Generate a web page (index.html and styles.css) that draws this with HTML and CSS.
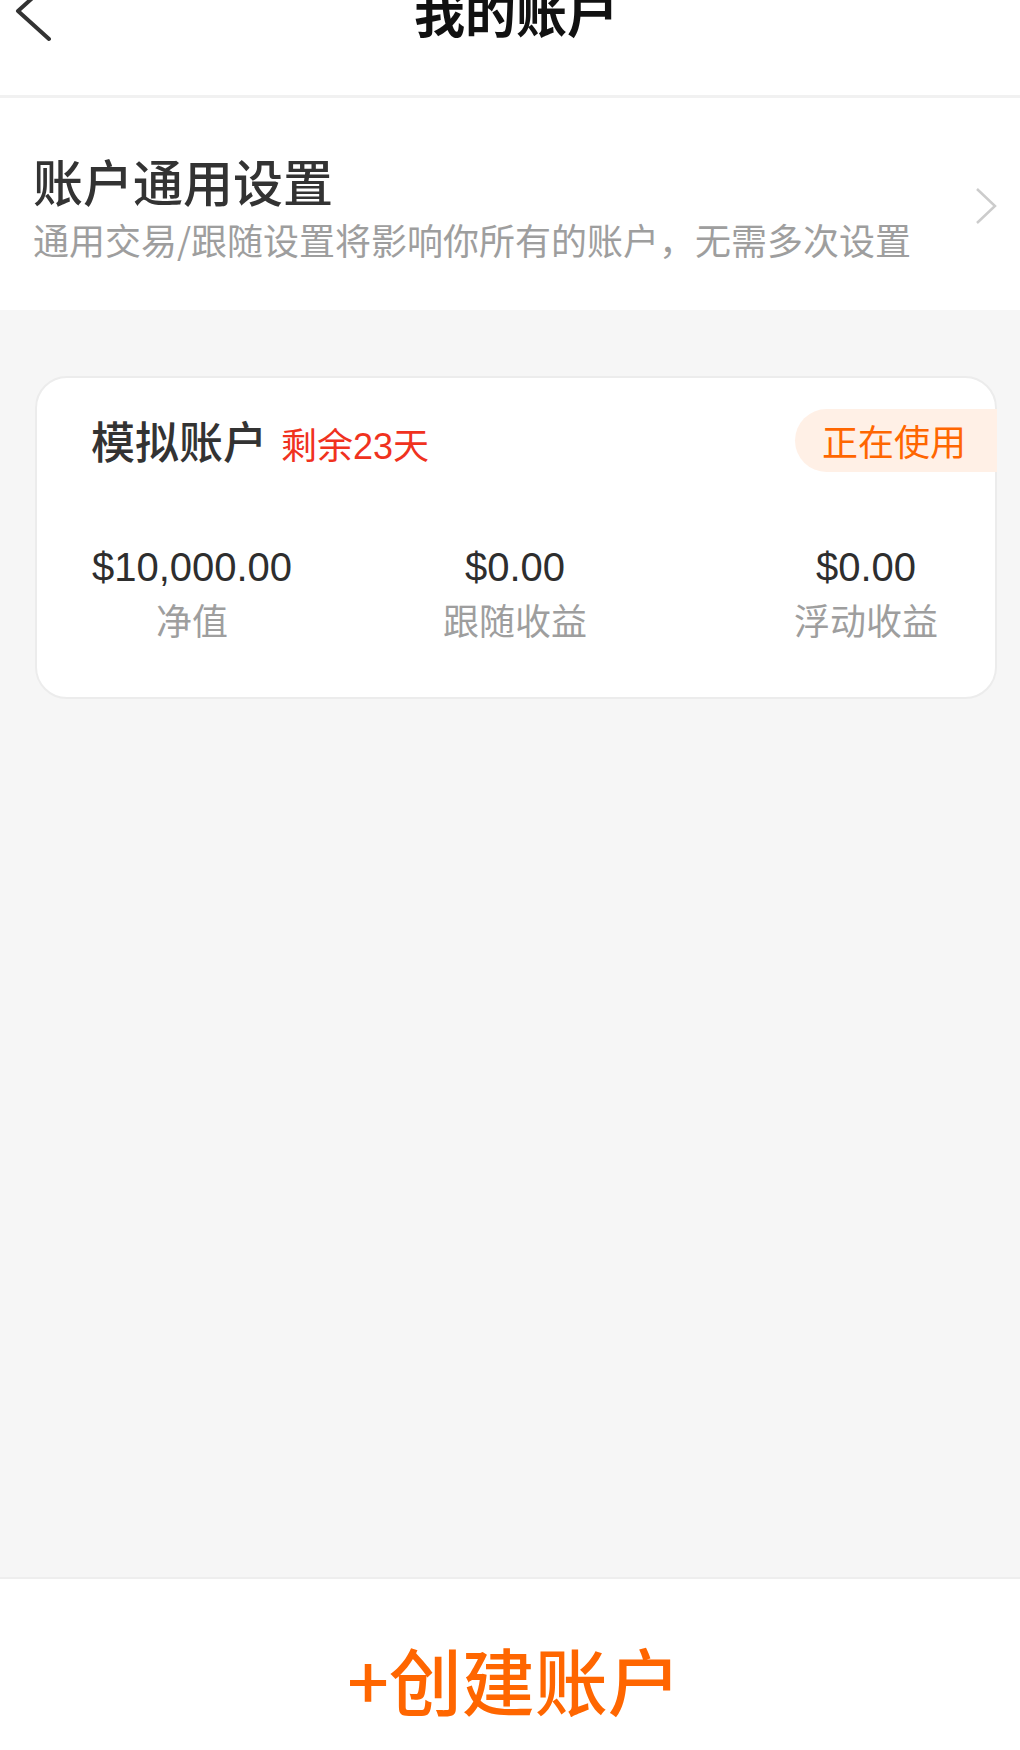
FILE: index.html
```html
<!DOCTYPE html>
<html lang="zh-CN">
<head>
  <meta charset="UTF-8">
  <meta name="viewport" content="width=device-width, initial-scale=1.0">
  <title>我的账户</title>
  <link rel="stylesheet" href="styles.css">
</head>
<body>
  <div class="page">
    <header class="header">
      <div class="nav-bar">
        <a class="back-btn" href="#">
          <svg width="60" height="66" viewBox="0 0 60 66">
            <polyline points="49,5 18,33 49,61" fill="none" stroke="#333" stroke-width="4" stroke-linecap="round" stroke-linejoin="round"/>
          </svg>
        </a>
        <h1 class="nav-title">我的账户</h1>
        <div></div>
      </div>
    </header>

    <a class="settings" href="#">
      <div class="settings-text">
        <div class="settings-title">账户通用设置</div>
        <div class="settings-desc">通用交易/跟随设置将影响你所有的账户，无需多次设置</div>
      </div>
      <svg class="chevron" width="22" height="38" viewBox="0 0 22 38">
        <polyline points="2,2 20,19 2,36" fill="none" stroke="#cccccc" stroke-width="2.5"/>
      </svg>
    </a>

    <main class="content">
      <div class="account-card">
        <div class="card-head">
          <div class="card-name">
            <span class="account-type">模拟账户</span>
            <span class="days-left">剩余23天</span>
          </div>
          <span class="status-badge">正在使用</span>
        </div>
        <div class="stats">
          <div class="stat">
            <div class="stat-value">$10,000.00</div>
            <div class="stat-label">净值</div>
          </div>
          <div class="stat">
            <div class="stat-value">$0.00</div>
            <div class="stat-label">跟随收益</div>
          </div>
          <div class="stat">
            <div class="stat-value">$0.00</div>
            <div class="stat-label">浮动收益</div>
          </div>
        </div>
      </div>
    </main>

    <footer class="bottom-bar">
      <button class="create-btn">+创建账户</button>
    </footer>
  </div>
</body>
</html>
```

FILE: styles.css
```css
body {
  margin: 0;
  padding: 0;
  font-family: "Noto Sans CJK SC", sans-serif;
  background-color: #f6f6f6;
  color: #333;
  overflow: hidden;
}

a {
  color: inherit;
  text-decoration: none;
}

.page {
  display: flex;
  flex-direction: column;
  height: 1750px;
}

/* top navigation, page is scrolled a little so the bar is cut */
.header {
  height: 95px;
  background-color: #fff;
  border-bottom: 3px solid #f1f1f1;
  overflow: hidden;
}

.nav-bar {
  display: grid;
  grid-template-columns: 1fr auto 1fr;
  align-items: center;
  height: 60px;
  margin-top: -19px;
}

.back-btn {
  display: flex;
  align-items: center;
  height: 60px;
}

.nav-title {
  margin: 0 0 0 12px;
  font-size: 51px;
  line-height: 60px;
  font-weight: 700;
  color: #111;
}

.settings {
  display: flex;
  align-items: center;
  justify-content: space-between;
  padding: 52px 23px 49px 33px;
  background-color: #fff;
}

.settings-title {
  font-size: 50px;
  line-height: 60px;
  font-weight: 500;
  color: #333;
}

.settings-desc {
  margin-top: 7px;
  font-size: 36px;
  line-height: 44px;
  color: #9e9e9e;
}

.chevron {
  display: block;
}

.content {
  flex: 1;
  padding: 66px 23px 0 35px;
}

.account-card {
  background-color: #fff;
  border: 2px solid #ececec;
  border-radius: 32px;
  padding: 31px 0 56px 0;
}

.card-head {
  display: flex;
  align-items: center;
  justify-content: space-between;
  padding-left: 54px;
}

.card-name {
  display: flex;
  align-items: baseline;
  gap: 14px;
}

.account-type {
  font-size: 44px;
  line-height: 56px;
  font-weight: 500;
  color: #333;
}

.days-left {
  font-size: 36px;
  color: #f0321e;
}

.days-left,
.stat-value {
  font-family: "Liberation Sans", "Noto Sans CJK SC", sans-serif;
}

.status-badge {
  height: 63px;
  line-height: 63px;
  margin-right: -2px;
  padding: 0 31px 0 27px;
  border-radius: 32px 0 0 32px;
  background-color: #fff0e6;
  color: #ff6600;
  font-size: 36px;
}

.stats {
  display: grid;
  grid-template-columns: 202px 444px 258px;
  margin-top: 73px;
  padding-left: 54px;
  text-align: center;
}

.stat-value {
  font-size: 40px;
  line-height: 44px;
  color: #2e2e2e;
}

.stat-label {
  margin-top: 8px;
  font-size: 36px;
  line-height: 44px;
  color: #9e9e9e;
}

.bottom-bar {
  height: 171px;
  background-color: #fff;
  border-top: 2px solid #eeeeee;
  text-align: center;
}

.create-btn {
  margin-top: 54px;
  padding: 0 0 0 8px;
  border: none;
  background: none;
  font-family: "Noto Sans CJK SC", sans-serif;
  font-size: 73px;
  line-height: 90px;
  font-weight: 500;
  color: #ff6600;
  cursor: pointer;
}
```
